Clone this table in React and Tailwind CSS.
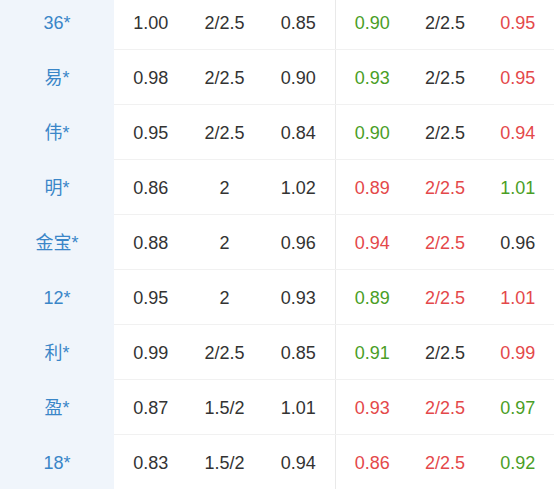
import React from "react";

const G = "g", R = "r", D = "d";
const rows = [
  ["36*", ["1.00", D], ["2/2.5", D], ["0.85", D], ["0.90", G], ["2/2.5", D], ["0.95", R]],
  ["易*", ["0.98", D], ["2/2.5", D], ["0.90", D], ["0.93", G], ["2/2.5", D], ["0.95", R]],
  ["伟*", ["0.95", D], ["2/2.5", D], ["0.84", D], ["0.90", G], ["2/2.5", D], ["0.94", R]],
  ["明*", ["0.86", D], ["2", D], ["1.02", D], ["0.89", R], ["2/2.5", R], ["1.01", G]],
  ["金宝*", ["0.88", D], ["2", D], ["0.96", D], ["0.94", R], ["2/2.5", R], ["0.96", D]],
  ["12*", ["0.95", D], ["2", D], ["0.93", D], ["0.89", G], ["2/2.5", R], ["1.01", R]],
  ["利*", ["0.99", D], ["2/2.5", D], ["0.85", D], ["0.91", G], ["2/2.5", D], ["0.99", R]],
  ["盈*", ["0.87", D], ["1.5/2", D], ["1.01", D], ["0.93", R], ["2/2.5", R], ["0.97", G]],
  ["18*", ["0.83", D], ["1.5/2", D], ["0.94", D], ["0.86", R], ["2/2.5", R], ["0.92", G]],
];

function Cell({ v }) {
  const cls =
    v[1] === G ? "text-[#4a9e26]" : v[1] === R ? "text-[#e4484a]" : "text-[#333333]";
  return <div className={`flex-1 flex items-center justify-center pt-[2px] ${cls}`}>{v[0]}</div>;
}

export default function App() {
  return (
    <div
      className="w-[554px] h-[489px] overflow-hidden bg-white text-[18px]"
      style={{ fontFamily: '"Liberation Sans", "Noto Sans CJK SC", sans-serif' }}
    >
      <div className="mt-[-5px] flex flex-col">
        {rows.map((r, i) => (
          <div key={i} className="flex h-[55px]">
            <div className="w-[114px] bg-[#f0f5fb] flex items-center justify-center pt-[2px] text-[#3a86c8]">
              {r[0]}
            </div>
            <div className="flex-1 flex border-b border-[#f1f1f1]">
              <div className="w-[221px] flex">
                <Cell v={r[1]} />
                <Cell v={r[2]} />
                <Cell v={r[3]} />
              </div>
              <div className="w-[1px] bg-[#e9e9e9]" />
              <div className="flex-1 flex">
                <Cell v={r[4]} />
                <Cell v={r[5]} />
                <Cell v={r[6]} />
              </div>
            </div>
          </div>
        ))}
      </div>
    </div>
  );
}
